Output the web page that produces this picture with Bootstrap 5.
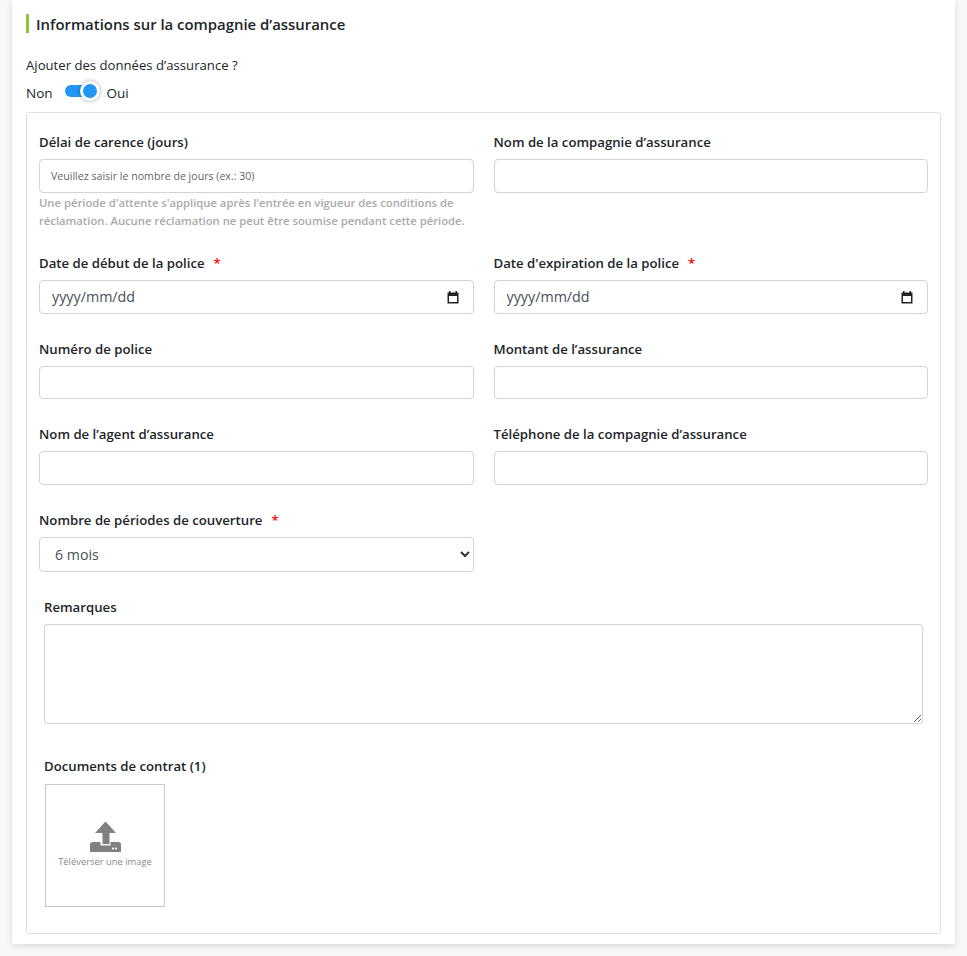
<!DOCTYPE html>
<html lang="fr">
<head>
<meta charset="utf-8">
<title>Assurance</title>
<link rel="stylesheet" href="https://cdn.jsdelivr.net/npm/bootstrap@5.3.0/dist/css/bootstrap.min.css">
<style>
html,body{height:956px;overflow:hidden}
body{background:#f8f8f8;font-family:"Open Sans","Noto Sans",sans-serif;color:#212529;font-size:13.15px}
.sheet{background:#fff;margin:0 12px;height:944px;padding:14px 14px 10px;box-shadow:0 2px 6px rgba(0,0,0,.12);display:flex;flex-direction:column}
.sec-title{border-left:3px solid #8cc63f;padding-left:7px;font-size:14.9px;font-weight:600;line-height:21px;height:19px;margin:0 0 22px}
.q-line{line-height:20px;margin-bottom:8px}
.toggle-line{height:20px;line-height:22px;margin-bottom:9px;font-size:13.5px}
.sw-track{width:30px;height:12px;border-radius:6px;background:#2196f3;position:relative;margin:0 12px 0 12px;top:-2px}
.sw-knob{position:absolute;right:-5px;top:-4px;width:20px;height:20px;border-radius:50%;background:#2196f3;border:3px solid #fff;box-shadow:0 0 4px rgba(0,0,0,.35)}
.inner-box{border:1px solid #dfe1e5;border-radius:3px;flex:1;padding:0 12px}
.form-grid{--bs-gutter-x:20px;--bs-gutter-y:0}
.fld-label{display:block;font-size:13.2px;font-weight:600;line-height:18px;margin:0 0 8px}
.req{color:#f00;margin-left:9px}
.fld{padding-top:21px;height:85.6px}
.fld-first{padding-top:20px;height:120px}
.fld .form-control,.fld .form-select,.fld-first .form-control{height:33.5px;border-color:#ced4da;border-radius:4px;font-size:13.5px;padding:4px 12px;box-shadow:none}
.fld-first .form-control.hint-input{font-size:10.6px;padding-left:11px}
.fld .form-select{height:35px;padding-left:15px;font-size:14.2px;color:#495057;background-image:url("data:image/svg+xml,%3Csvg xmlns='http://www.w3.org/2000/svg' viewBox='0 0 10 8'%3E%3Cpath fill='none' stroke='%23333' stroke-width='2' d='M1 2l4 4 4-4'/%3E%3C/svg%3E");background-position:right 3px center;background-size:10px 8px}
.hint-text{color:#aaa;font-size:11.25px;font-weight:600;line-height:18px;margin-top:1px}
.fld .date-fake{color:#495057;font-size:14.3px;background-image:url("data:image/svg+xml,%3Csvg xmlns='http://www.w3.org/2000/svg' width='14' height='14' viewBox='0 0 14 14'%3E%3Cpath fill='%23222' d='M3 1h1.500v1.500h5V1H11v1.500h1.500v11h-11v-11H3zM3 6v6h8V6z'/%3E%3C/svg%3E");background-repeat:no-repeat;background-position:right 13px center;background-size:14px}
.wide-blk{padding:0 5px}
.blk-notes{margin-top:23px}
.blk-docs{margin-top:33px}
.note-area{height:100px;border-color:#ced4da;border-radius:3px}
.blk-docs .fld-label{margin-bottom:9px}
.up-box{width:120px;height:123px;margin-left:1px;border:1px solid #c8c8c8;display:flex;flex-direction:column;align-items:center;padding-top:36px;color:#8a8a8a;font-size:9.4px;line-height:14px}
.up-box svg{width:32px;height:32px;margin-bottom:2px}
</style>
</head>
<body>
<div class="sheet">
  <h2 class="sec-title">Informations sur la compagnie d’assurance</h2>
  <div class="q-line">Ajouter des données d’assurance ?</div>
  <div class="toggle-line d-flex align-items-center">
    <span>Non</span>
    <span class="sw-track"><span class="sw-knob"></span></span>
    <span>Oui</span>
  </div>
  <div class="inner-box">
    <div class="row form-grid">
      <div class="col-6 fld-first">
        <label class="fld-label">Délai de carence (jours)</label>
        <input class="form-control hint-input" placeholder="Veuillez saisir le nombre de jours (ex.: 30)">
        <div class="hint-text">Une période d'attente s'applique après l'entrée en vigueur des conditions de réclamation. Aucune réclamation ne peut être soumise pendant cette période.</div>
      </div>
      <div class="col-6 fld-first">
        <label class="fld-label">Nom de la compagnie d’assurance</label>
        <input class="form-control">
      </div>
      <div class="col-6 fld">
        <label class="fld-label">Date de début de la police<span class="req">*</span></label>
        <input class="form-control date-fake" value="yyyy/mm/dd">
      </div>
      <div class="col-6 fld">
        <label class="fld-label">Date d'expiration de la police<span class="req">*</span></label>
        <input class="form-control date-fake" value="yyyy/mm/dd">
      </div>
      <div class="col-6 fld">
        <label class="fld-label">Numéro de police</label>
        <input class="form-control">
      </div>
      <div class="col-6 fld">
        <label class="fld-label">Montant de l’assurance</label>
        <input class="form-control">
      </div>
      <div class="col-6 fld">
        <label class="fld-label">Nom de l’agent d’assurance</label>
        <input class="form-control">
      </div>
      <div class="col-6 fld">
        <label class="fld-label">Téléphone de la compagnie d’assurance</label>
        <input class="form-control">
      </div>
      <div class="col-6 fld">
        <label class="fld-label">Nombre de périodes de couverture<span class="req">*</span></label>
        <select class="form-select"><option>6 mois</option></select>
      </div>
    </div>
    <div class="wide-blk blk-notes">
      <label class="fld-label">Remarques</label>
      <textarea class="form-control note-area"></textarea>
    </div>
    <div class="wide-blk blk-docs">
      <label class="fld-label">Documents de contrat (1)</label>
      <div class="up-box">
        <svg viewBox="0 0 32 32" aria-hidden="true"><path fill="#808080" d="M16.500 0.500L27 12h-6.500v11h-7V12H6zM1 22.500L3 21h8.500v3.500h10V21H30l2 1.500V31H1z"/><circle cx="24" cy="27.500" r="1.100" fill="#fff"/><circle cx="27" cy="27.500" r="1.100" fill="#fff"/></svg>
        <span>Téléverser une image</span>
      </div>
    </div>
  </div>
</div>
</body>
</html>
